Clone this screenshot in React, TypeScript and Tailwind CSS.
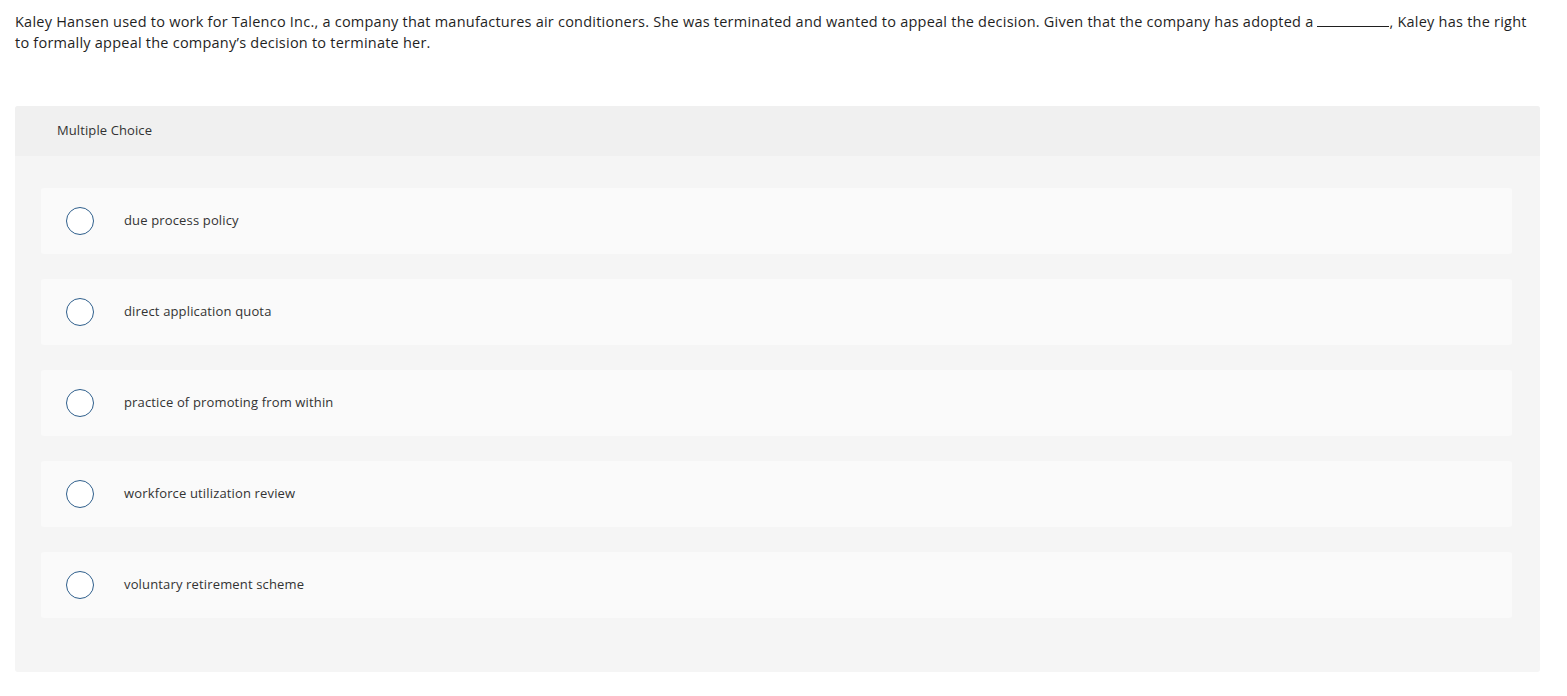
const options = [
  "due process policy",
  "direct application quota",
  "practice of promoting from within",
  "workforce utilization review",
  "voluntary retirement scheme",
];

function Radio() {
  return (
    <span className="block h-[28px] w-[28px] shrink-0 rounded-full border-[1.5px] border-[#2f5f8c] bg-white" />
  );
}

export default function App() {
  return (
    <div className="min-h-screen bg-white font-['Open_Sans','Liberation_Sans',sans-serif] text-[#1f1f1f]">
      <p className="px-[15px] pt-[11px] pr-[30px] text-[14.5px] leading-[21px] tracking-[0.23px]">
        Kaley Hansen used to work for Talenco Inc., a company that manufactures air conditioners. She was
        terminated and wanted to appeal the decision. Given that the company has adopted a{" "}
        <span className="inline-block h-[14px] w-[72px] border-b border-[#1f1f1f]" />, Kaley has the right
        to formally appeal the company’s decision to terminate her.
      </p>

      <div className="mx-[15px] mt-[53px] w-[1525px] overflow-hidden rounded-[3px] bg-[#f5f5f5]">
        <div className="flex h-[50px] items-center bg-[#f0f0f0] px-[42px] text-[13px] tracking-[0.1px] text-[#333]">
          Multiple Choice
        </div>
        <div className="flex flex-col gap-[25px] px-[26px] pt-[32px] pb-[54px]">
          {options.map((opt) => (
            <div
              key={opt}
              className="flex h-[66px] w-[1471px] items-center rounded-[3px] bg-[#fafafa] pl-[25px]"
            >
              <Radio />
              <span className="ml-[30px] text-[13px] tracking-[0.15px] text-[#333]">{opt}</span>
            </div>
          ))}
        </div>
      </div>
    </div>
  );
}
